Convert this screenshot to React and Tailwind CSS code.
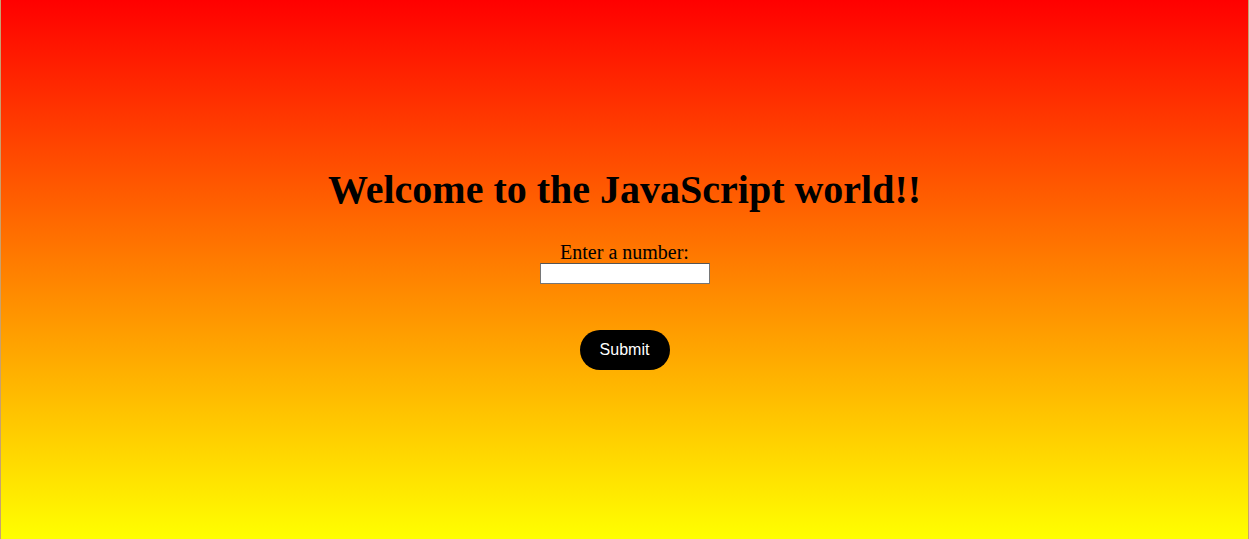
import React from 'react';

const App = () => {
    return (
        <div className="h-[539px] w-full bg-[linear-gradient(to_bottom,#ff0000,#ffff00)] border-x border-x-[#c8a070] flex flex-col items-center pt-[167px] font-['Liberation_Serif',serif] text-black">
            <h1 className="text-[40px] font-bold leading-[46px]">
                Welcome to the JavaScript world!!
            </h1>

            <label className="mt-[28px] text-[20px] leading-[22px]">
                Enter a number:
            </label>
            <input
                type="text"
                className="w-[170px] h-[21px] bg-white border border-[#767676] border-t-[#555] outline-none"
            />

            <button className="mt-[46px] w-[90px] h-[40px] rounded-full bg-black text-white text-[16px] font-['Liberation_Sans',sans-serif]">
                Submit
            </button>
        </div>
    );
};

export default App;
